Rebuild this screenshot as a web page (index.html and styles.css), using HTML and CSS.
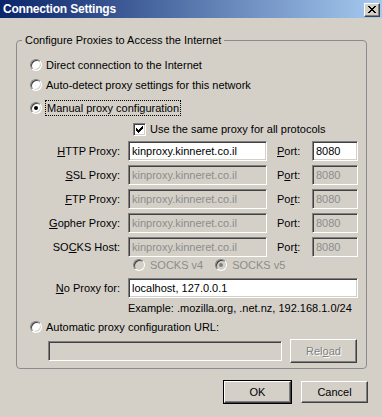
FILE: index.html
```html
<!DOCTYPE html>
<html lang="en">
<head>
  <meta charset="UTF-8">
  <title>Connection Settings</title>
  <link rel="stylesheet" href="styles.css">
</head>
<body>
  <div class="window">
    <!-- title bar -->
    <div class="titlebar">
      <span class="title">Connection Settings</span>
      <span class="close-btn">
        <svg width="8" height="7" viewBox="0 0 8 7" shape-rendering="crispEdges">
          <path d="M0 0h2v1h-2zM6 0h2v1h-2zM1 1h2v1h-2zM5 1h2v1h-2zM2 2h4v1h-4zM3 3h2v1h-2zM2 4h4v1h-4zM1 5h2v1h-2zM5 5h2v1h-2zM0 6h2v1h-2zM6 6h2v1h-2z" fill="#000"/>
        </svg>
      </span>
    </div>

    <div class="content">
      <fieldset class="group">
        <legend>Configure Proxies to Access the Internet</legend>

        <div class="radio-row row-direct">
          <span class="radio"></span>
          <span>Direct connection to the Internet</span>
        </div>
        <div class="radio-row row-auto">
          <span class="radio"></span>
          <span>Auto-detect proxy settings for this network</span>
        </div>
        <div class="radio-row row-manual">
          <span class="radio checked"></span>
          <span class="focus">Manual proxy configuration</span>
        </div>

        <div class="check-row">
          <span class="checkbox">
            <svg width="7" height="7" viewBox="0 0 7 7" shape-rendering="crispEdges">
              <path d="M0 2h1v3h-1zM1 3h1v3h-1zM2 4h1v3h-1zM3 3h1v3h-1zM4 2h1v3h-1zM5 1h1v3h-1zM6 0h1v3h-1z" fill="#000"/>
            </svg>
          </span>
          <span>Use the same proxy for all protocols</span>
        </div>

        <div class="proxy-grid">
          <label class="lbl"><u>H</u>TTP Proxy:</label>
          <div class="field">kinproxy.kinneret.co.il</div>
          <label class="port-lbl"><u>P</u>ort:</label>
          <div class="field">8080</div>

          <label class="lbl"><u>S</u>SL Proxy:</label>
          <div class="field disabled">kinproxy.kinneret.co.il</div>
          <label class="port-lbl">P<u>o</u>rt:</label>
          <div class="field disabled">8080</div>

          <label class="lbl"><u>F</u>TP Proxy:</label>
          <div class="field disabled">kinproxy.kinneret.co.il</div>
          <label class="port-lbl">Po<u>r</u>t:</label>
          <div class="field disabled">8080</div>

          <label class="lbl"><u>G</u>opher Proxy:</label>
          <div class="field disabled">kinproxy.kinneret.co.il</div>
          <label class="port-lbl">Port:</label>
          <div class="field disabled">8080</div>

          <label class="lbl">SO<u>C</u>KS Host:</label>
          <div class="field disabled">kinproxy.kinneret.co.il</div>
          <label class="port-lbl">Por<u>t</u>:</label>
          <div class="field disabled">8080</div>
        </div>

        <div class="socks-row">
          <span class="socks-opt">
            <span class="radio disabled"></span>
            <span>SOCKS v4</span>
          </span>
          <span class="socks-opt">
            <span class="radio disabled checked"></span>
            <span>SOCKS v5</span>
          </span>
        </div>

        <div class="noproxy-row">
          <label class="lbl"><u>N</u>o Proxy for:</label>
          <div class="field wide">localhost, 127.0.0.1</div>
        </div>
        <div class="example">Example: .mozilla.org, .net.nz, 192.168.1.0/24</div>

        <div class="radio-row row-url">
          <span class="radio"></span>
          <span>Automatic proxy configuration URL:</span>
        </div>
        <div class="url-row">
          <div class="field disabled url"></div>
          <button class="btn reload" disabled>Rel<u>o</u>ad</button>
        </div>
      </fieldset>

      <div class="buttons">
        <button class="btn default">OK</button>
        <button class="btn">Cancel</button>
      </div>
    </div>
  </div>
</body>
</html>
```

FILE: styles.css
```css
/* base */
body {
  margin: 0;
  font-family: "Liberation Sans", Arial, sans-serif;
  font-size: 11px;
  color: #000;
  background: #d4d0c8;
}

.window {
  width: 382px;
  height: 417px;
  background: #d4d0c8;
  overflow: hidden;
}

/* title bar */
.titlebar {
  height: 18px;
  display: flex;
  align-items: center;
  justify-content: space-between;
  padding: 0 2px 0 3px;
  background: linear-gradient(to right, #0a246a, #a6caf0);
}

.title {
  color: #fff;
  font-weight: bold;
  font-size: 12px;
  letter-spacing: -0.2px;
}

.close-btn {
  width: 16px;
  height: 14px;
  box-sizing: border-box;
  background: #d4d0c8;
  border: 1px solid;
  border-color: #fff #404040 #404040 #fff;
  box-shadow: inset -1px -1px #808080;
  display: flex;
  align-items: center;
  justify-content: center;
  margin-top: 1px;
}

/* group box */
.content {
  padding-top: 15px;
}

.group {
  margin: 0 15px 0 16px;
  padding: 0 0 5px 0;
  border: 1px solid #8c8c8c;
  border-radius: 4px;
  min-inline-size: auto;
}

.group legend {
  margin-left: 5px;
  padding: 0 3px;
  line-height: 14px;
}

/* radios and checkbox */
.radio-row {
  height: 16px;
  display: flex;
  align-items: center;
  padding-left: 13px;
  gap: 4px;
}

.row-direct { margin-top: 10px; }
.row-auto { margin-top: 4px; }
.row-manual { margin-top: 7px; }
.row-url { margin-top: 3px; }

.radio {
  width: 12px;
  height: 12px;
  box-sizing: border-box;
  border-radius: 50%;
  border: 1px solid;
  border-color: #808080 #fff #fff #808080;
  box-shadow: inset 1px 1px #404040, inset -1px -1px #d4d0c8;
  background: #fff;
  position: relative;
  flex: none;
}

.radio.checked::after {
  content: "";
  position: absolute;
  left: 3px;
  top: 3px;
  width: 4px;
  height: 4px;
  border-radius: 50%;
  background: #000;
}

.radio.disabled {
  background: #d4d0c8;
}

.radio.disabled.checked::after {
  background: #808080;
}

.focus {
  outline: 1px dotted #000;
  outline-offset: 0;
  padding: 1px 1px;
}

.check-row {
  height: 16px;
  margin-top: 5px;
  display: flex;
  align-items: center;
  gap: 4px;
  padding-left: 116px;
}

.checkbox {
  width: 13px;
  height: 13px;
  box-sizing: border-box;
  border: 1px solid;
  border-color: #808080 #fff #fff #808080;
  box-shadow: inset 1px 1px #404040, inset -1px -1px #d4d0c8;
  background: #fff;
  display: flex;
  align-items: center;
  justify-content: center;
}

/* proxy fields */
.proxy-grid {
  margin-top: 4px;
  display: grid;
  grid-template-columns: 111px 149px 35px 46px;
  grid-auto-rows: 20px;
  row-gap: 4px;
  align-items: center;
}

.lbl {
  text-align: right;
  padding-right: 8px;
}

.field {
  height: 20px;
  box-sizing: border-box;
  border: 1px solid;
  border-color: #808080 #fff #fff #808080;
  box-shadow: inset 1px 1px #404040, inset -1px -1px #d4d0c8;
  background: #fff;
  padding: 0 3px;
  line-height: 18px;
  white-space: nowrap;
  overflow: hidden;
}

.proxy-grid .field:nth-child(4n+2) {
  width: 139px;
}

.field.disabled {
  background: #d4d0c8;
  color: #8c8c8c;
}

.socks-row {
  height: 16px;
  display: flex;
  align-items: center;
  padding-left: 116px;
  gap: 12px;
  color: #8c8c8c;
}

.socks-opt {
  display: flex;
  align-items: center;
  gap: 5px;
}

.noproxy-row {
  margin-top: 5px;
  display: grid;
  grid-template-columns: 111px 230px;
  align-items: center;
}

.example {
  height: 16px;
  line-height: 16px;
  margin-top: 2px;
  padding-left: 111px;
  white-space: nowrap;
}

.url-row {
  margin-top: 4px;
  height: 24px;
  display: flex;
  align-items: center;
  padding-left: 31px;
  gap: 8px;
}

.field.url {
  width: 234px;
}

/* buttons */
.btn {
  font-family: inherit;
  font-size: 11px;
  color: #000;
  background: #d4d0c8;
  height: 22px;
  width: 67px;
  padding: 0;
  border: 1px solid;
  border-color: #fff #404040 #404040 #fff;
  box-shadow: inset -1px -1px #808080;
}

.btn.reload {
  height: 24px;
  color: #808080;
  text-shadow: 1px 1px #fff;
}

.btn.default {
  outline: 1px solid #000;
  outline-offset: 0;
}

.buttons {
  margin-top: 12px;
  display: flex;
  justify-content: flex-end;
  gap: 10px;
  padding-right: 14px;
}
```
